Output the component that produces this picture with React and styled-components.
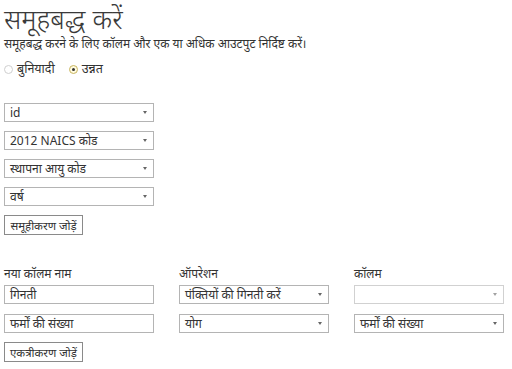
import React from "react";
import styled, { createGlobalStyle } from "styled-components";

const Global = createGlobalStyle`
    body {
        margin: 0;
        background: #ffffff;
        font-family: "Noto Sans", "Open Sans", sans-serif;
        color: #333333;
    }
`

const Page = styled.div`
    padding: 0 4px;
    width: 512px;
    box-sizing: border-box;
`

const Title = styled.h1`
    margin: 0;
    font-size: 27px;
    font-weight: 300;
    line-height: 38px;
    color: #3a3a3a;
`

const Intro = styled.p`
    margin: -3px 0 0 0;
    font-size: 12px;
    line-height: 18px;
`

const RadioRow = styled.div`
    display: flex;
    align-items: center;
    gap: 14px;
    margin-top: 7px;
    font-size: 12.5px;
    line-height: 18px;
`

const RadioLabel = styled.label`
    display: flex;
    align-items: center;
    gap: 4px;
`

const RadioDot = styled.span`
    width: 7px;
    height: 7px;
    border-radius: 50%;
    border: 1px solid ${p => p.checked ? "#c9b560" : "#cfcfcf"};
    background: ${p => p.checked ? "#fffbe0" : "#fff"};
    display: flex;
    align-items: center;
    justify-content: center;
    &::after {
        content: "";
        width: 3px;
        height: 3px;
        border-radius: 50%;
        background: ${p => p.checked ? "#333" : "transparent"};
    }
`

const GroupList = styled.div`
    display: flex;
    flex-direction: column;
    gap: 9px;
    margin-top: 25px;
`

const SelectBox = styled.div`
    width: 150px;
    height: 19px;
    box-sizing: border-box;
    border: 1px solid #b4b4b4;
    background: #fff;
    display: flex;
    align-items: center;
    justify-content: space-between;
    padding: 0 6px 0 5px;
    font-size: 12px;
    color: #333;
    opacity: ${p => p.disabled ? 0.6 : 1};
`

const Arrow = styled.span`
    width: 0;
    height: 0;
    border-left: 2.5px solid transparent;
    border-right: 2.5px solid transparent;
    border-top: 3px solid #666;
`

const Button = styled.button`
    align-self: flex-start;
    height: 20px;
    width: 79px;
    box-sizing: border-box;
    border: 1px solid #8a8a8a;
    background: #fff;
    font-family: inherit;
    font-size: 11.5px;
    color: #333;
    padding: 0;
    margin-top: ${p => p.top || 0}px;
`

const AggGrid = styled.div`
    display: grid;
    grid-template-columns: 150px 150px 150px;
    column-gap: 25px;
    row-gap: 10px;
    margin-top: 31px;
`

const ColHead = styled.div`
    font-size: 12px;
    line-height: 16px;
    margin-bottom: -7px;
`

const TextBox = styled.div`
    height: 19px;
    box-sizing: border-box;
    border: 1px solid #b4b4b4;
    background: #fff;
    padding: 0 5px;
    display: flex;
    align-items: center;
    font-size: 12px;
`

function Select({ value, disabled }) {
    return (
        <SelectBox disabled={disabled}>
            <span>{value}</span>
            <Arrow />
        </SelectBox>
    )
}

export default function App() {
    return (
        <Page>
            <Global />
            <Title>समूहबद्ध करें</Title>
            <Intro>समूहबद्ध करने के लिए कॉलम और एक या अधिक आउटपुट निर्दिष्ट करें।</Intro>
            <RadioRow>
                <RadioLabel><RadioDot />बुनियादी</RadioLabel>
                <RadioLabel><RadioDot checked />उन्नत</RadioLabel>
            </RadioRow>

            <GroupList>
                <Select value="id" />
                <Select value="2012 NAICS कोड" />
                <Select value="स्थापना आयु कोड" />
                <Select value="वर्ष" />
                <Button>समूहीकरण जोड़ें</Button>
            </GroupList>

            <AggGrid>
                <ColHead>नया कॉलम नाम</ColHead>
                <ColHead>ऑपरेशन</ColHead>
                <ColHead>कॉलम</ColHead>

                <TextBox>गिनती</TextBox>
                <Select value="पंक्तियों की गिनती करें" />
                <Select value="" disabled />

                <TextBox>फर्मों की संख्या</TextBox>
                <Select value="योग" />
                <Select value="फर्मों की संख्या" />
            </AggGrid>
            <Button top={9}>एकत्रीकरण जोड़ें</Button>
        </Page>
    )
}
